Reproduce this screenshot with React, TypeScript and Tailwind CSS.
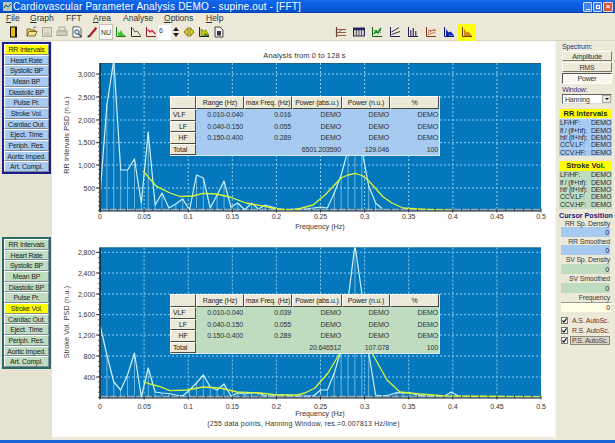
import React from "react";

const LEFT = ["RR Intervals","Heart Rate","Systolic BP","Mean BP","Diastolic BP","Pulse Pr.","Stroke Vol.","Cardiac Out.","Eject. Time","Periph. Res.","Aortic Imped.","Art. Compl."];
const XL = ["0","0.05","0.1","0.15","0.2","0.25","0.3","0.35","0.4","0.45","0.5"];

const spec1 = [195,105,60,170,170,159,203,132,205,193,208,204,199,210,175,178,208,195,181,207,203,210,203,209,205,207,209,210,209,209,209,208,207,208,193,175,150,100,150,186,203,209];
const smooth1: [number,number][] = [[143,170.7],[150,179],[157,186.7],[170,193],[180,196.5],[193,196],[203,193.3],[216,194],[230,197],[246,203],[263,206],[277,209],[293,210],[300,208.5],[313,205],[325,195],[341,178],[348,175],[355,173.3],[362,175.5],[368,180],[383,196.7],[392,203],[403,208],[426,209.3],[453,210.5]];
const spec2 = [325,355,382,390,375,353,397,368,392,393,393.5,395,396,390,383,375,387,390,384,396,393,394,393,393,396,396,395,395,396,396,396,396,390,390,373,350,300,245,293,353,395,396,395,392.7,393,393,395,396,396,396,396,392,396];
const smooth2: [number,number][] = [[143,381.7],[150,384],[160,386.7],[170,390.7],[187,390],[203,387],[220,388],[237,392],[260,393],[277,395],[297,395],[305,393],[315,388],[328,373],[340,353],[348,335],[355,325],[362,335],[372,353],[387,380],[400,392],[420,394],[446,396],[500,396.5],[540,397]];

function line(pts: [number,number][]) {
  return pts.map((p, i) => (i ? "L" : "M") + p[0] + " " + p[1]).join(" ");
}

function Chart({ id, top, zero, labels, minor, title, titleY, spec, smooth, children, vb, freqY, tickY }: any) {
  const bottom = zero;
  const sx = (i: number) => 100 + i * 6.89;
  const pts: [number,number][] = spec.map((y: number, i: number) => [sx(i), y]);
  const ticks: number[] = [];
  for (let v = 0; v <= 0.5001; v += 0.01) ticks.push(v);
  const h = vb[1];
  return (
    <div className="relative h-[178px] w-[503px]">
      <svg viewBox={`52 ${h} 503 178`} width={503} height={178} className="block">
        <defs>
          <clipPath id={id}><rect x="100" y={top} width="441" height={bottom - top} /></clipPath>
        </defs>
        <rect x="100" y={top} width="441" height={bottom - top} fill="#0578bd" />
        <line x1="100" x2="541" y1={top + 0.5} y2={top + 0.5} stroke="#1d5f84" />
        <line x1="100" x2="541" y1={bottom - 1} y2={bottom - 1} stroke="#8fa6b4" strokeWidth="1.5" />
        {XL.map((_, i) => i > 0 && i < 10 ? <line key={i} x1={100 + i * 44.1} x2={100 + i * 44.1} y1={top} y2={bottom} stroke="#8dd0f2" strokeDasharray="2 2" /> : null)}
        {labels.map((l: any) => <line key={l[0]} x1="100" x2="541" y1={l[1]} y2={l[1]} stroke="#8dd0f2" strokeDasharray="2 2" />)}
        <g clipPath={`url(#${id})`}>
          {pts.map((p, i) => p[1] < bottom - 2.5 ? <line key={i} x1={p[0]} x2={p[0]} y1={p[1]} y2={bottom} stroke="#cfeffa" strokeWidth="0.8" opacity="0.65" /> : null)}
          <path d={line(pts)} fill="none" stroke="#cdf1fb" strokeWidth="1.2" strokeLinejoin="round" />
          <path d={line(smooth)} fill="none" stroke="#d8f53a" strokeWidth="1.3" strokeLinejoin="round" />
        </g>
        <line x1="100" x2="100" y1={top} y2={bottom + 1} stroke="#10202c" strokeWidth="1.5" />
        <line x1="100" x2="541" y1={bottom + 0.5} y2={bottom + 0.5} stroke="#10202c" strokeWidth="1" />
        {ticks.map((v, i) => <line key={i} x1={100 + v * 882} x2={100 + v * 882} y1={bottom - 2} y2={bottom + (i % 5 === 0 ? 2 : 0)} stroke="#10202c" strokeWidth="0.8" />)}
        {minor.map((y: number) => <line key={y} x1="98" x2="100" y1={y} y2={y} stroke="#333" strokeWidth="0.7" />)}
        {labels.map((l: any) => <line key={l[0]} x1="96" x2="100" y1={l[1]} y2={l[1]} stroke="#333" />)}
        {labels.map((l: any) => <text key={l[0]} x="95" y={l[1] + 2.5} textAnchor="end" fontSize="7" letterSpacing="-0.1" fill="#333">{l[0]}</text>)}
        {XL.map((l, i) => <text key={l} x={100 + i * 44.1} y={tickY} textAnchor="middle" fontSize="7" letterSpacing="-0.1" fill="#333">{l}</text>)}
        <text transform={`translate(69 ${titleY}) rotate(-90)`} textAnchor="middle" fontSize="7.2" letterSpacing="0.1" fill="#333">{title}</text>
        <text x="320" y={freqY} textAnchor="middle" fontSize="7.2" fill="#333">Frequency (Hz)</text>
      </svg>
      {children}
    </div>
  );
}

function DataTable({ bg, top, rows, total }: any) {
  const head = "bg-[#ece9d8] border-r border-b border-r-[#4a4a44] border-b-[#4a4a44] border-t border-l border-t-white border-l-white flex items-center justify-center";
  const cell = "flex items-center justify-end pr-[1px] text-[#26323a]";
  return (
    <div className={`absolute left-[118px] ${top} grid grid-cols-[26px_48px_48px_50px_48px_49px] grid-rows-[13px_repeat(4,11.5px)] text-[7px] tracking-[-0.15px] leading-none ${bg} border-b border-r border-b-[#dfeaf2] border-r-[#dfeaf2] text-[#222]`}>
      <div className={head} />
      {["Range (Hz)","max Freq. (Hz)","Power (abs.u.)","Power (n.u.)","%"].map((t) => <div key={t} className={head}>{t}</div>)}
      {rows.map((r: any) => (
        <React.Fragment key={r[0]}>
          <div className={`${head} ${r[0] === "VLF" ? "justify-start pl-[2px]" : ""}`}>{r[0]}</div>
          <div className={cell}>{r[1]}</div>
          <div className={cell}>{r[2]}</div>
          <div className={cell}>DEMO</div>
          <div className={cell}>DEMO</div>
          <div className={cell}>DEMO</div>
        </React.Fragment>
      ))}
      <div className={`${head} justify-start pl-[2px]`}>Total</div>
      <div /><div />
      <div className={cell}>{total[0]}</div>
      <div className={cell}>{total[1]}</div>
      <div className={cell}>100</div>
    </div>
  );
}

function LeftPanel({ border, bg, active, cls }: any) {
  return (
    <div className={`flex flex-col ${cls} ml-[2px] h-[132px] w-[49px] border-2 ${border}`}>
      {LEFT.map((t, i) => (
        <div key={t} className={`flex-1 flex items-center justify-center text-[7px] tracking-[-0.2px] leading-none text-[#222] border border-t-white border-l-white border-b-[#7f8a96] border-r-[#7f8a96] ${i === active ? "bg-[#ffff00]" : bg}`}>{t}</div>
      ))}
    </div>
  );
}

function Ico({ children, w = 15, cls = "" }: any) {
  return (
    <div className={`flex items-center justify-center h-[16px] ${cls}`} style={{ width: w }}>
      <svg width="12" height="12" viewBox="0 0 12 12">{children}</svg>
    </div>
  );
}

const Axes = ({ c = "#333" }: { c?: string }) => <path d="M1.5 1v9.5H11" fill="none" stroke={c} strokeWidth="1" />;

function Toolbar() {
  return (
    <div className="flex items-center h-[17px] bg-[#ece9d8] border-b border-b-[#d8d5c4] pl-[7px]">
      <Ico w={14}><rect x="2" y="0.5" width="7" height="11" fill="#111" /><rect x="3" y="1.5" width="4" height="9" fill="#e8c000" /></Ico>
      <div className="w-[3px]" />
      <Ico><path d="M1 10V3h3l1 1h4v1.5" fill="#f0d878" stroke="#5a4a10" strokeWidth="0.8" /><path d="M1 10l2-4.5h8L9 10z" fill="#f8e090" stroke="#5a4a10" strokeWidth="0.8" /><path d="M7 2l2-1.5 1.5 1.5" fill="none" stroke="#1a3a9a" strokeWidth="0.7" /></Ico>
      <Ico><rect x="1.5" y="1.5" width="9" height="9" fill="#dedbca" stroke="#aaa899" /><rect x="3.5" y="6.5" width="5" height="4" fill="#c8c6b6" /></Ico>
      <Ico><rect x="3" y="1" width="6" height="4" fill="#e6e3d4" stroke="#aaa899" /><rect x="1" y="5" width="10" height="4.5" fill="#cfccbc" stroke="#aaa899" /></Ico>
      <Ico><path d="M2 .8h6l2 2v8.4H2z" fill="#fff" stroke="#333" strokeWidth="0.8" /><circle cx="6" cy="6" r="2.2" fill="#cfe6f5" stroke="#1d3d5d" strokeWidth="0.9" /><path d="M7.6 7.8L10.5 11" stroke="#222" strokeWidth="1.1" /></Ico>
      <Ico><path d="M1.5 11L9.5 1l1.7 1.5L4 11z" fill="#b01028" /><path d="M1.5 11.5L4 11 2 9z" fill="#222" /></Ico>
      <div className="w-[14px] h-[16px] bg-[#fbfaf5] border border-[#c4c1b0] flex items-center justify-center text-[7px] text-[#333] leading-none">NU</div>
      <Ico><Axes c="#207a20" /><path d="M3 10V5l1.5 2L6 4l2 4 2 1v1z" fill="#40c040" /></Ico>
      <Ico><Axes c="#333" /><path d="M2.5 2l2.5 4 2-1 3.5 4.5" fill="none" stroke="#445" strokeWidth="0.9" /></Ico>
      <Ico><Axes c="#8a2030" /><path d="M2.5 3.5L5 6l2-1.5L10.5 8" fill="none" stroke="#d01030" strokeWidth="1.2" /></Ico>
      <div className="w-[13px] h-[15px] bg-white text-[7px] pl-[1px] pt-[1px] text-[#333] leading-[9px]">6</div>
      <div className="w-[9px] h-[15px] bg-[#ece9d8] flex flex-col items-center justify-center gap-[2px]">
        <div className="w-0 h-0 border-l-[3px] border-r-[3px] border-b-[4px] border-l-transparent border-r-transparent border-b-[#222]" />
        <div className="w-0 h-0 border-l-[3px] border-r-[3px] border-t-[4px] border-l-transparent border-r-transparent border-t-[#222]" />
      </div>
      <div className="w-[1px]" />
      <Ico><path d="M5 1.5L1 6l4 4.5zM7 1.5L11 6l-4 4.5z" fill="#e8d000" stroke="#6a5a00" strokeWidth="0.8" /></Ico>
      <Ico><Axes c="#222" /><path d="M3 9.5V3l3 2 2-1 3 5.5z" fill="#d8c000" stroke="#3a7a20" strokeWidth="0.6" /><path d="M6.5 9.5V7L11 9.5z" fill="#1a7a2a" /></Ico>
      <Ico><path d="M2 1h5l3 3v7H2z" fill="#eee" stroke="#333" strokeWidth="0.9" /><rect x="4" y="5" width="4" height="4.5" fill="#333" /></Ico>
      <div className="w-[106px]" />
      <Ico w={18}><path d="M1.5 1v10" stroke="#6a3a2a" strokeWidth="1.2" /><path d="M1.5 3.5H11M1.5 6.5H11M1.5 9.5H11" stroke="#a05a4a" strokeWidth="1" /><path d="M4 6l3-2.5" stroke="#333" strokeWidth="0.6" /></Ico>
      <Ico w={18}><rect x="0.5" y="2" width="11" height="8" fill="#c8c8c0" stroke="#2a2a60" /><rect x="0.5" y="2" width="11" height="2.2" fill="#222266" /><path d="M3.5 4v6M6 4v6M8.5 4v6" stroke="#444" strokeWidth="0.7" /></Ico>
      <Ico w={18}><Axes c="#106010" /><path d="M3 8l2-3 2 2 3-5" fill="none" stroke="#109020" strokeWidth="1.5" /><path d="M3 4.5h8M3 6.5h8" stroke="#108020" strokeWidth="0.7" strokeDasharray="1 1" /></Ico>
      <Ico w={18}><Axes c="#22225a" /><path d="M2.5 6L10 1.5M2.5 8.5L11 5.5" fill="none" stroke="#334" strokeWidth="1" /></Ico>
      <Ico w={18}><Axes c="#22225a" /><path d="M3.8 10V4M6.3 10V2M8.8 10V5" stroke="#22225a" strokeWidth="1.1" /></Ico>
      <Ico w={18}><Axes c="#7a3a1a" /><path d="M2.5 7L10 3M2.5 9l8-3M3 4.5h8" fill="none" stroke="#c86a3a" strokeWidth="0.9" /></Ico>
      <Ico w={18}><Axes c="#10107a" /><path d="M3 10V3l2.5 3.5 2-1 3 3V10z" fill="#1020b0" /><path d="M6 10V8l5 2z" fill="#2a90d8" /></Ico>
      <div className="w-[18px] h-[17px] bg-[#ffff10] flex items-center justify-center">
        <svg width="12" height="12" viewBox="0 0 12 12"><Axes c="#6a3a1a" /><path d="M3 10V2.5l2.5 4 2-1 3 3.5V10z" fill="#d88a10" /></svg>
      </div>
    </div>
  );
}

function Row({ l }: { l: string }) {
  return (
    <div className="flex h-[7.4px] items-center leading-none pl-[1px]">
      <span className="w-[31px] whitespace-nowrap text-[#1e2a40]">{l}</span>
      <span className="text-[#1e2a40]">DEMO</span>
    </div>
  );
}

const RL = ["LF/HF:","lf / (lf+hf):","hf/ (lf+hf):","CCV.LF:","CCV.HF:"];

function Btn({ t, pressed, cls }: any) {
  return (
    <div className={`${cls} mx-[6px] w-[50px] flex items-center justify-center leading-none border ${pressed ? "bg-[#f7f6ef] border-t-[#555] border-l-[#555] border-b-white border-r-white" : "bg-[#ece9d8] border-t-white border-l-white border-b-[#7a786c] border-r-[#7a786c]"} text-[#333]`}>{t}</div>
  );
}

function Lab({ t, cls }: any) {
  return <div className={`${cls} pr-[5px] text-right leading-none flex items-center justify-end text-[#3a3a3a]`}>{t}</div>;
}
function Box({ bg, v }: any) {
  return <div className={`h-[10px] mx-[5px] w-[49px] ${bg} flex items-center justify-end pr-[1px] leading-none text-[#223]`}>{v}</div>;
}
function Chk({ t, focus }: any) {
  return (
    <div className="flex h-[10px] items-center pl-[5px]">
      <div className="w-[7px] h-[7px] bg-white border border-[#777] flex items-center justify-center shrink-0">
        <svg width="5" height="5" viewBox="0 0 6 6" className="shrink-0"><path d="M.5 3L2.3 5 5.5.5" fill="none" stroke="#111" strokeWidth="1.4" /></svg>
      </div>
      <span className={`ml-[3px] px-[1px] leading-none whitespace-nowrap text-[#6e2f2f] ${focus ? "bg-[#d4d7c4] outline outline-[#8a8a80]" : ""}`}>{t}</span>
    </div>
  );
}

function RightPanel() {
  return (
    <div className="w-[60px] shrink-0 bg-[#ece9d8] border-l border-l-[#f6f5ec] text-[7px] tracking-[-0.2px]">
      <div className="mt-[1px] h-[9px] pl-[6px] leading-[9px] text-[#33338a]">Spectrum:</div>
      <Btn t="Amplitude" cls="h-[10px]" />
      <Btn t="RMS" cls="h-[10px] mt-[1px]" />
      <Btn t="Power" pressed cls="h-[11px] mt-[1px]" />
      <div className="mt-[2px] h-[8px] pl-[6px] leading-[8px] text-[#33338a]">Window:</div>
      <div className="h-[10px] mx-[6px] w-[50px] bg-white border border-t-[#666] border-l-[#666] border-b-[#ddd] border-r-[#ddd] flex items-center justify-between pl-[2px] leading-none text-[#333]">
        Hanning
        <div className="w-[9px] h-full bg-[#ece9d8] border border-[#aaa] flex items-center justify-center">
          <div className="w-0 h-0 border-l-[2px] border-r-[2px] border-t-[2px] border-l-transparent border-r-transparent border-t-[#111]" />
        </div>
      </div>
      <div className="mt-[5px] mx-[3px] h-[9px] bg-[#ffff00] flex items-center justify-center font-bold text-[7.5px] tracking-normal leading-none text-[#222]">RR Intervals</div>
      <div className="mt-[1px] mx-[3px] h-[37px] bg-[#a6caf0]">{RL.map((l) => <Row key={l} l={l} />)}</div>
      <div className="mt-[5px] mx-[3px] h-[10px] bg-[#ffff00] flex items-center justify-center font-bold text-[7.5px] tracking-normal leading-none text-[#222]">Stroke Vol.</div>
      <div className="mx-[3px] h-[38px] bg-[#c0dcc0]">{RL.map((l) => <Row key={l} l={l} />)}</div>
      <div className="mt-[2px] h-[9px] pl-[3px] flex items-center leading-none font-bold text-[#1a1a7a] text-[7.2px] tracking-normal whitespace-nowrap">Cursor Position</div>
      <Lab t="RR Sp. Density" cls="h-[7px]" />
      <Box bg="bg-[#a6caf0]" v="0" />
      <Lab t="RR Smoothed" cls="h-[8px]" />
      <Box bg="bg-[#a6caf0]" v="0" />
      <Lab t="SV Sp. Density" cls="h-[9px]" />
      <Box bg="bg-[#c0dcc0]" v="0" />
      <Lab t="SV Smoothed" cls="h-[9px]" />
      <Box bg="bg-[#c0dcc0]" v="0" />
      <Lab t="Frequency" cls="h-[9px]" />
      <div className="h-[10px] mx-[5px] w-[50px] bg-[#ffffe6] border-t border-t-[#999] flex items-center justify-end pr-[1px] leading-none text-[#223]">0</div>
      <div className="h-[3px]" />
      <Chk t="A.S. AutoSc." />
      <Chk t="R.S. AutoSc." />
      <Chk t="P.S. AutoSc." focus />
    </div>
  );
}

export default function App() {
  const lab1 = [["3,000",74],["2,500",97],["2,000",120],["1,500",142.7],["1,000",165],["500",188]];
  const min1: number[] = [];
  for (let i = 0; i < 31; i++) min1.push(210.5 - i * 4.56);
  const lab2 = [["2,800",252.3],["2,400",273],["2,000",294],["1,600",314.7],["1,200",335],["800",356],["400",377]];
  const min2: number[] = [];
  for (let i = 0; i < 29; i++) min2.push(397.5 - i * 5.18);
  return (
    <div className="w-[615px] h-[443px] overflow-hidden flex flex-col bg-[#ece9d8] font-['Liberation_Sans',sans-serif] text-[#222]">
      <div className="h-[13px] shrink-0 flex items-center bg-[linear-gradient(180deg,#1a6ff0_0%,#0b62e6_20%,#0a5cdc_60%,#0452d0_85%,#0340a8_100%)]">
        <svg width="9" height="9" viewBox="0 0 9 9" className="ml-[3px]"><rect width="9" height="9" fill="#b8c8b8" /><path d="M1 6l2-3 2 2 3-3" fill="none" stroke="#205060" /></svg>
        <span className="ml-[1px] text-[10px] leading-none tracking-[0.2px] text-white whitespace-nowrap">Cardiovascular Parameter Analysis DEMO - supine.out - [FFT]</span>
        <div className="ml-auto mr-[2px] flex gap-[1px]">
          <div className="w-[9px] h-[10px] bg-[#4a80e8] border border-[#cfe0fa] rounded-[1px] flex items-end justify-center pb-[1px]"><div className="w-[4px] h-[1px] bg-white" /></div>
          <div className="w-[9px] h-[10px] bg-[#4a80e8] border border-[#cfe0fa] rounded-[1px] flex items-center justify-center"><div className="w-[4px] h-[4px] border border-white" /></div>
          <div className="w-[10px] h-[10px] bg-[#d8553a] border border-[#f5d8cf] rounded-[1px] flex items-center justify-center text-white text-[8px] font-bold leading-none">×</div>
        </div>
      </div>
      <div className="h-[11px] shrink-0 relative flex items-center text-[8.5px] leading-none text-[#333] pl-[6px] bg-[#ece9d8]">
        <span className="w-[24px]"><u>F</u>ile</span>
        <span className="w-[36px]"><u>G</u>raph</span>
        <span className="w-[27px]">FFT</span>
        <span className="w-[30px]"><u>A</u>rea</span>
        <span className="w-[41px]">Analyse</span>
        <span className="w-[42px]"><u>O</u>ptions</span>
        <span><u>H</u>elp</span>
      </div>
      <Toolbar />
      <div className="flex flex-1 min-h-0">
        <div className="w-[52px] shrink-0 flex flex-col bg-[#e6e3d3]">
          <LeftPanel cls="mt-[1px]" border="border-[#1c1c8c]" bg="bg-[#a6caf0]" active={0} />
          <LeftPanel cls="mt-[63px]" border="border-[#2a6a6a]" bg="bg-[#c0dcc0]" active={6} />
        </div>
        <div className="w-[503px] shrink-0 flex flex-col">
          <div className="bg-white flex flex-col h-[396px]">
            <div className="h-[21px] shrink-0 flex items-end justify-center pb-[3px] text-[7.5px] tracking-[0.1px] leading-none text-[#333] pl-[2px]">Analysis from 0 to 128 s</div>
            <Chart id="c1" vb={[52, 62]} top={63} zero={210.5} labels={lab1} minor={min1} title="RR Intervals PSD (n.u.)" titleY={135} spec={spec1} smooth={smooth1} freqY={229} tickY={219}>
              <DataTable bg="bg-[#a6caf0]" top="top-[34px]" rows={[["VLF","0.010-0.040","0.016"],["LF","0.040-0.150","0.055"],["HF","0.150-0.400","0.289"]]} total={["6501.203590","129.046"]} />
            </Chart>
            <Chart id="c2" vb={[52, 240]} top={247.5} zero={397.5} labels={lab2} minor={min2} title="Stroke Vol. PSD (n.u.)" titleY={322} spec={spec2} smooth={smooth2} freqY={416} tickY={408.5}>
              <DataTable bg="bg-[#c0dcc0]" top="top-[54px]" rows={[["VLF","0.010-0.040","0.039"],["LF","0.040-0.150","0.055"],["HF","0.150-0.400","0.289"]]} total={["20.646512","107.078"]} />
            </Chart>
            <div className="flex-1 flex items-start justify-center text-[7px] leading-none text-[#333] tracking-[0.2px] pt-[2px]">(255 data points, Hanning Window, res.=0.007813 Hz/line)</div>
          </div>
        </div>
        <RightPanel />
      </div>
      <div className="h-[3px] shrink-0 bg-[#1a62d8]" />
    </div>
  );
}
